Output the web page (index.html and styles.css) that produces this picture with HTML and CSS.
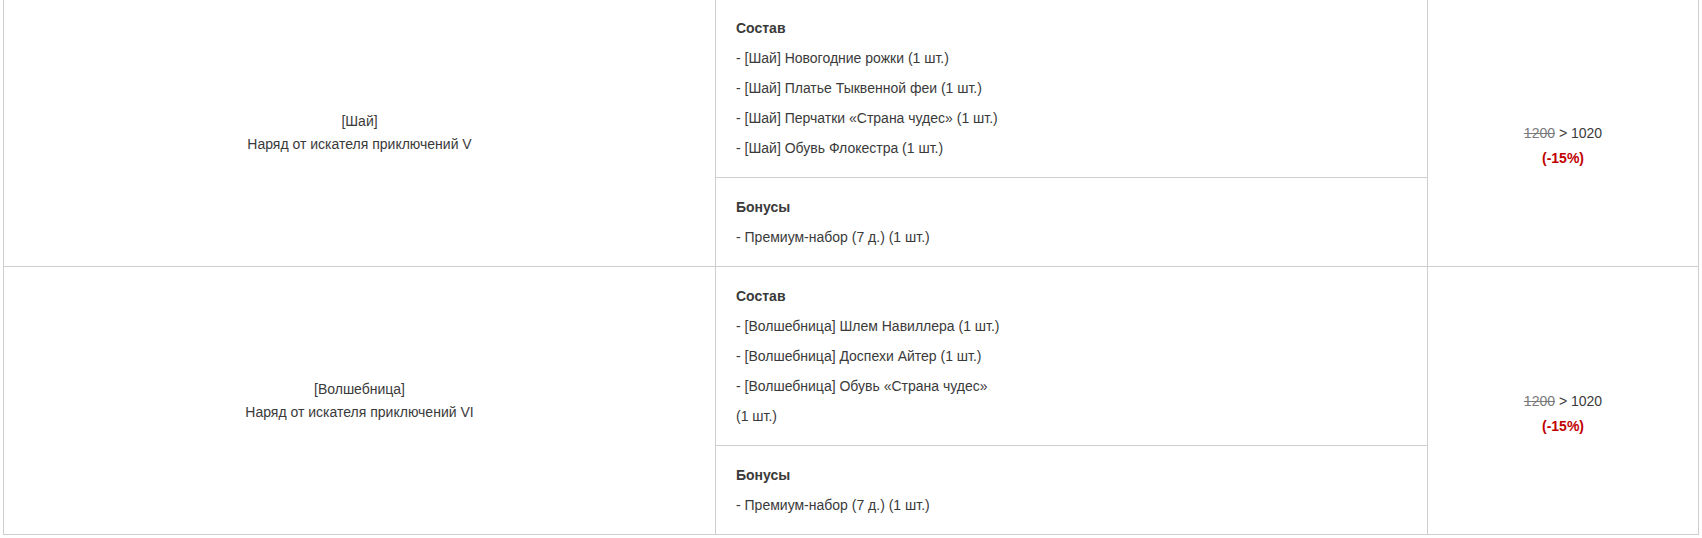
FILE: index.html
```html
<!DOCTYPE html>
<html lang="ru">
<head>
<meta charset="utf-8">
<title>Наряды</title>
<link rel="stylesheet" href="styles.css">
</head>
<body>
<table class="sets">
  <colgroup>
    <col class="c-name">
    <col class="c-items">
    <col class="c-price">
  </colgroup>
  <tbody>
    <tr>
      <td class="name" rowspan="2">[Шай]<br>Наряд от искателя приключений V</td>
      <td class="items">
        <p class="head">Состав</p>
        <p class="item">- [Шай] Новогодние рожки (1&nbsp;шт.)</p>
        <p class="item">- [Шай] Платье Тыквенной феи (1&nbsp;шт.)</p>
        <p class="item">- [Шай] Перчатки «Страна чудес» (1&nbsp;шт.)</p>
        <p class="item">- [Шай] Обувь Флокестра (1&nbsp;шт.)</p>
      </td>
      <td class="price" rowspan="2">
        <div class="price-line"><s class="old">1200</s> &gt; 1020</div>
        <div class="discount">(-15%)</div>
      </td>
    </tr>
    <tr>
      <td class="items">
        <p class="head">Бонусы</p>
        <p class="item">- Премиум-набор (7 д.) (1&nbsp;шт.)</p>
      </td>
    </tr>
    <tr>
      <td class="name" rowspan="2">[Волшебница]<br>Наряд от искателя приключений VI</td>
      <td class="items">
        <p class="head">Состав</p>
        <p class="item">- [Волшебница] Шлем Навиллера (1&nbsp;шт.)</p>
        <p class="item">- [Волшебница] Доспехи Айтер (1&nbsp;шт.)</p>
        <p class="item">- [Волшебница] Обувь «Страна чудес» (1&nbsp;шт.)</p>
      </td>
      <td class="price" rowspan="2">
        <div class="price-line"><s class="old">1200</s> &gt; 1020</div>
        <div class="discount">(-15%)</div>
      </td>
    </tr>
    <tr>
      <td class="items">
        <p class="head">Бонусы</p>
        <p class="item">- Премиум-набор (7 д.) (1&nbsp;шт.)</p>
      </td>
    </tr>
  </tbody>
</table>
</body>
</html>
```

FILE: styles.css
```css
html, body {
  margin: 0;
  padding: 0;
  background: #ffffff;
}

body {
  font-family: "Liberation Sans", Arial, sans-serif;
  font-size: 14px;
  color: #3a3a3a;
}

.sets {
  border-collapse: collapse;
  table-layout: fixed;
  width: 1695px;
  margin: -2px 0 0 3px;
}

.c-name { width: 712px; }
.c-items { width: 712px; }
.c-price { width: 271px; }

.sets td {
  border: 1px solid #cfcfcf;
  padding: 14px 20px;
  vertical-align: middle;
}

.name {
  text-align: center;
  line-height: 23px;
}

.items {
  text-align: left;
}

.items p {
  margin: 0;
  line-height: 30px;
}

.items .item {
  max-width: 278px;
}

.items .head {
  font-weight: bold;
}

.sets td.price {
  text-align: center;
  padding-top: 40px;
  padding-bottom: 14px;
}

.price-line {
  line-height: 20px;
}

.old {
  color: #7a7a7a;
}

.discount {
  margin-top: 5px;
  line-height: 20px;
  font-weight: bold;
  color: #c00000;
}
```
